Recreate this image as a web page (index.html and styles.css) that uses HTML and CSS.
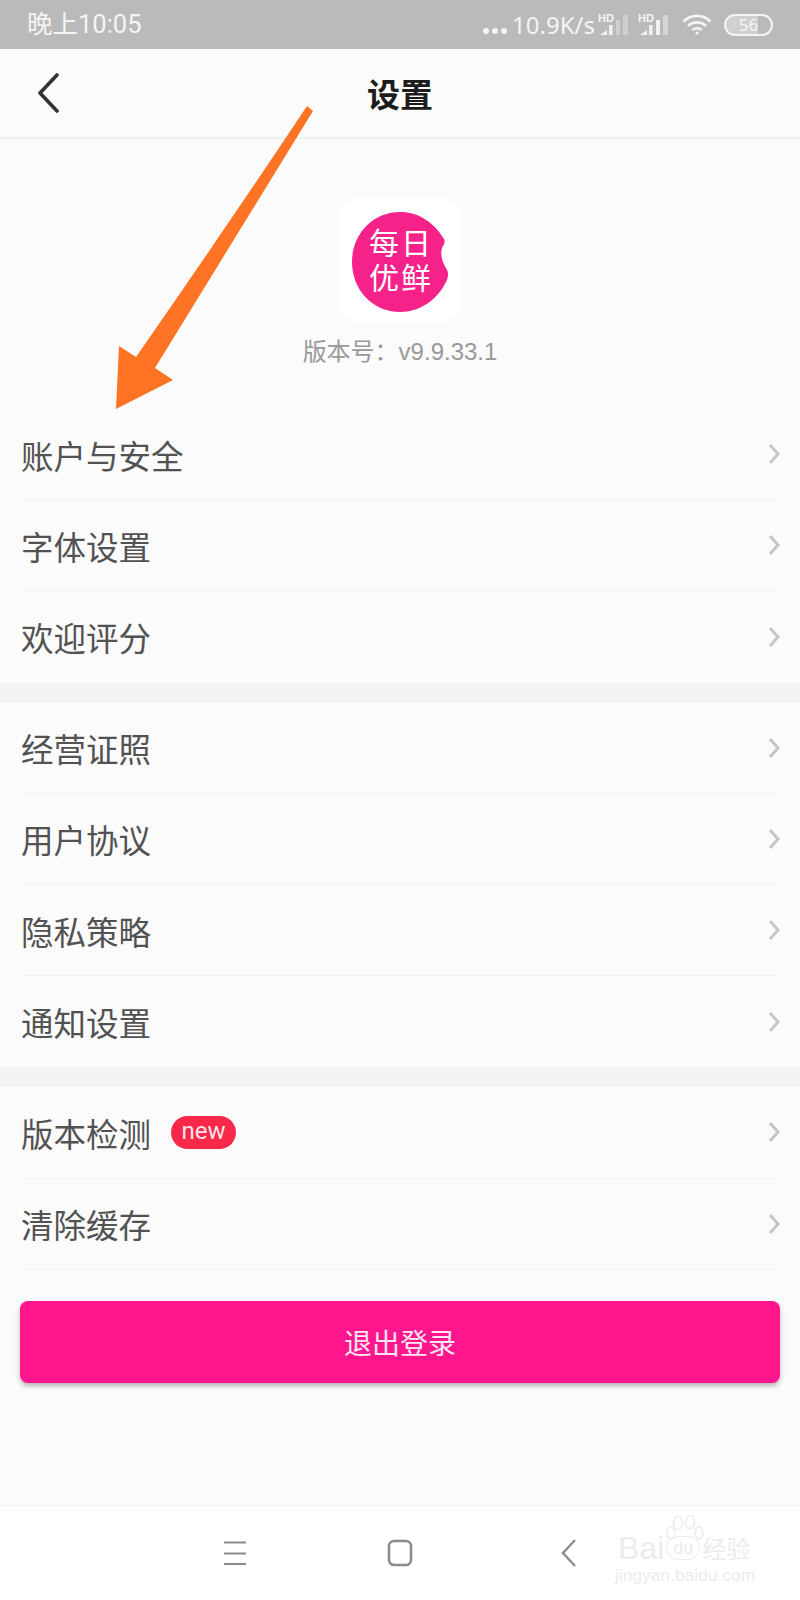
FILE: index.html
```html
<!DOCTYPE html>
<html lang="zh-CN">
<head>
<meta charset="UTF-8" />
<meta name="viewport" content="width=device-width, initial-scale=1.0" />
<title>设置</title>
<link rel="stylesheet" href="styles.css">
</head>
<body>
  <div class="status">
    <div class="status-time">晚上10:05</div>
    <div class="status-right">
      <span class="dots"><i></i><i></i><i></i></span>
      <span class="speed">10.9K/s</span>
      <span class="sim">
        <b>HD</b>
        <svg width="30" height="22" viewBox="0 0 30 22"><path d="M2 21l7-5v5z" fill="#f1f1f1"/><rect x="11" y="11" width="3.5" height="10" fill="#f1f1f1"/><rect x="18" y="6" width="4" height="15" fill="#cfcfcf"/><rect x="25" y="1" width="5" height="20" fill="#cfcfcf"/></svg>
      </span>
      <span class="sim">
        <b>HD</b>
        <svg width="30" height="22" viewBox="0 0 30 22"><path d="M2 21l7-5v5z" fill="#f1f1f1"/><rect x="11" y="11" width="3.5" height="10" fill="#f1f1f1"/><rect x="18" y="6" width="4" height="15" fill="#f1f1f1"/><rect x="25" y="1" width="5" height="20" fill="#d4d4d4"/></svg>
      </span>
      <svg class="wifi" width="30" height="21" viewBox="0 0 30 21" fill="none" stroke="#f4f4f4" stroke-width="2.6"><path d="M1.5 7.5a19 19 0 0 1 27 0"/><path d="M6 12a13 13 0 0 1 18 0"/><path d="M10.5 16a6.5 6.5 0 0 1 9 0"/><circle cx="15" cy="19" r="1.6" fill="#f4f4f4" stroke="none"/></svg>
      <span class="battery">56</span>
    </div>
  </div>

  <div class="header">
    <svg class="back" width="24" height="40" viewBox="0 0 24 40" fill="none" stroke="#333" stroke-width="3.6" stroke-linecap="round" stroke-linejoin="round"><path d="M20 2L3 20l17 18"/></svg>
    <h1>设置</h1>
  </div>

  <div class="main">
    <div class="about">
      <div class="app-icon">
        <div class="logo">
          <svg width="96" height="100" viewBox="0 0 96 100"><path d="M48 0C66 0 82 10 92 27 94 31 91 33 90 36 88 42 90 50 95 58 97 62 96 66 94 70 85 88 68 100 48 100 21 100 0 78 0 50S21 0 48 0z" fill="#f5228a"/></svg>
          <div class="logo-text">每日<br>优鲜</div>
        </div>
      </div>
      <div class="version">版本号：v9.9.33.1</div>
    </div>

    <div class="group">
      <div class="row"><span>账户与安全</span><svg class="chev" width="12" height="22" viewBox="0 0 12 22"><path d="M2 2l8 9-8 9"/></svg></div>
      <div class="row"><span>字体设置</span><svg class="chev" width="12" height="22" viewBox="0 0 12 22"><path d="M2 2l8 9-8 9"/></svg></div>
      <div class="row last"><span>欢迎评分</span><svg class="chev" width="12" height="22" viewBox="0 0 12 22"><path d="M2 2l8 9-8 9"/></svg></div>
    </div>
    <div class="group">
      <div class="row"><span>经营证照</span><svg class="chev" width="12" height="22" viewBox="0 0 12 22"><path d="M2 2l8 9-8 9"/></svg></div>
      <div class="row"><span>用户协议</span><svg class="chev" width="12" height="22" viewBox="0 0 12 22"><path d="M2 2l8 9-8 9"/></svg></div>
      <div class="row"><span>隐私策略</span><svg class="chev" width="12" height="22" viewBox="0 0 12 22"><path d="M2 2l8 9-8 9"/></svg></div>
      <div class="row last"><span>通知设置</span><svg class="chev" width="12" height="22" viewBox="0 0 12 22"><path d="M2 2l8 9-8 9"/></svg></div>
    </div>
    <div class="group plain">
      <div class="row"><span>版本检测</span><em class="badge">new</em><svg class="chev" width="12" height="22" viewBox="0 0 12 22"><path d="M2 2l8 9-8 9"/></svg></div>
      <div class="row"><span>清除缓存</span><svg class="chev" width="12" height="22" viewBox="0 0 12 22"><path d="M2 2l8 9-8 9"/></svg></div>
    </div>

    <button class="logout">退出登录</button>
  </div>

  <div class="nav">
    <svg class="nav-menu" width="24" height="24" viewBox="0 0 24 24" fill="none" stroke="#8c8c8c" stroke-width="2.2"><path d="M1 1.5h22M1 12.5h22M1 23h22"/></svg>
    <svg class="nav-home" width="26" height="30" viewBox="0 0 26 30" fill="none" stroke="#8c8c8c" stroke-width="2.6"><rect x="2" y="3" width="22" height="24" rx="5"/></svg>
    <svg class="nav-back" width="16" height="30" viewBox="0 0 16 30" fill="none" stroke="#8c8c8c" stroke-width="2.4"><path d="M14 2L2 15l12 13"/></svg>
  </div>

  <div class="watermark">
    <div class="wm-top">
      <span>Bai</span>
      <span class="wm-du">du</span>
      <span class="wm-cn">经验</span>
    </div>
    <svg class="wm-paw" width="40" height="28" viewBox="0 0 40 28" fill="none" stroke="#ececec" stroke-width="1.5"><ellipse cx="6" cy="18" rx="4" ry="6"/><ellipse cx="13" cy="8" rx="4.5" ry="7"/><ellipse cx="25" cy="7" rx="4.5" ry="6.5"/><ellipse cx="34" cy="18" rx="4" ry="6"/></svg>
    <div class="wm-url">jingyan.baidu.com</div>
  </div>

  <svg class="arrow" width="200" height="304" viewBox="0 0 200 304"><path d="M191 0l6 5L39 262l18 12-57 29 3-63 17 11Q118 110 191 0z" fill="#ff7424"/></svg>
</body>
</html>
```

FILE: styles.css
```css
* {
  box-sizing: border-box;
}
html, body {
  margin: 0;
  padding: 0;
}
body {
  position: relative;
  width: 800px;
  height: 1600px;
  display: flex;
  flex-direction: column;
  overflow: hidden;
  background: #fbfbfb;
  font-family: "Noto Sans CJK SC", "Noto Sans", sans-serif;
  color: #4a4a4a;
}

/* status bar */
.status {
  height: 49px;
  flex: none;
  display: flex;
  align-items: center;
  justify-content: space-between;
  padding: 0 27px;
  background: #bababa;
  color: #f4f4f4;
}
.status-time {
  font-size: 25.5px;
  line-height: 49px;
  font-family: Roboto, "Noto Sans CJK SC", sans-serif;
}
.status-right {
  display: flex;
  align-items: center;
}
.dots {
  display: flex;
  gap: 3px;
  margin-top: 12px;
  margin-right: 5px;
}
.dots i {
  width: 6px;
  height: 6px;
  border-radius: 50%;
  background: #f4f4f4;
}
.speed {
  font-family: "Noto Sans", sans-serif;
  font-size: 24px;
  line-height: 30px;
  margin-right: 3px;
}
.sim {
  position: relative;
  width: 30px;
  height: 22px;
  margin-right: 10px;
}
.sim svg {
  display: block;
}
.sim b {
  position: absolute;
  left: 0;
  top: 0;
  font: bold 11px/9px "Liberation Sans", sans-serif;
}
.wifi {
  margin-left: 4px;
  margin-right: 12px;
}
.battery {
  width: 49px;
  height: 22px;
  border: 2px solid #f4f4f4;
  border-radius: 11px;
  font-family: "Noto Sans", sans-serif;
  font-size: 17px;
  line-height: 18px;
  text-align: center;
  background: linear-gradient(90deg, #d0d0d0 70%, transparent 70%);
}

/* title bar */
.header {
  position: relative;
  height: 90px;
  flex: none;
  display: flex;
  align-items: center;
  justify-content: center;
  border-bottom: 2px solid #f0f0f0;
}
.header h1 {
  margin: 0;
  font-size: 33px;
  font-weight: 700;
  color: #1c1c1c;
}
.back {
  position: absolute;
  left: 37px;
  top: 24px;
}

.main {
  flex: 1;
  display: flex;
  flex-direction: column;
}
.about {
  height: 270px;
  flex: none;
  padding-top: 60px;
  display: flex;
  flex-direction: column;
  align-items: center;
}
.app-icon {
  width: 122px;
  height: 122px;
  padding-top: 3px;
  display: flex;
  align-items: center;
  justify-content: center;
  border-radius: 20px;
  background: #fff;
}
.logo {
  position: relative;
  width: 96px;
  height: 100px;
}
.logo svg {
  display: block;
}
.logo-text {
  position: absolute;
  left: 17px;
  top: 14px;
  width: 66px;
  color: #fff;
  font-family: "Liberation Sans", "Noto Sans CJK SC", sans-serif;
  font-size: 30px;
  line-height: 35px;
  letter-spacing: 2px;
  white-space: nowrap;
}
.version {
  margin-top: 10px;
  font-family: "Liberation Sans", "Noto Sans CJK SC", sans-serif;
  font-size: 24px;
  line-height: 42px;
  color: #999;
}

/* setting rows */
.group {
  flex: none;
  border-bottom: 20px solid #f3f3f3;
}
.group.plain {
  border-bottom: none;
}
.row {
  height: 91.2px;
  margin: 0 20px;
  padding-left: 1px;
  display: flex;
  align-items: center;
  border-bottom: 1px solid #f2f2f2;
  font-size: 32.5px;
  color: #525252;
}
.row.last {
  border-bottom: none;
}
.chev {
  margin-left: auto;
  fill: none;
  stroke: #c6c6c6;
  stroke-width: 3;
}
.badge {
  margin-left: 20px;
  width: 65px;
  height: 33px;
  border-radius: 17px;
  background: #f8284a;
  color: #fde4e8;
  font-family: Roboto, sans-serif;
  font-style: normal;
  font-size: 24px;
  line-height: 30px;
  text-align: center;
}
.logout {
  margin: 31px 20px 0;
  height: 82px;
  flex: none;
  border: none;
  border-radius: 8px;
  background: #ff168c;
  box-shadow: 0 3px 5px rgba(0, 0, 0, 0.28);
  color: #fde4f1;
  font-family: "Noto Sans CJK SC", sans-serif;
  font-size: 28px;
}

/* bottom nav */
.nav {
  height: 95px;
  flex: none;
  display: flex;
  align-items: center;
  background: #fff;
  border-top: 1px solid #f2f2f2;
}
.nav-menu {
  margin-left: 223px;
}
.nav-home {
  margin-left: 140px;
}
.nav-back {
  margin-left: 148px;
}

/* overlays: watermark and annotation arrow */
.watermark {
  position: absolute;
  left: 615px;
  top: 1515px;
  width: 146px;
  height: 78px;
  color: #ececec;
  font-family: "Liberation Sans", sans-serif;
}
.wm-top {
  position: absolute;
  left: 3px;
  top: 16px;
  display: flex;
  align-items: center;
  font-size: 32px;
  line-height: 34px;
  white-space: nowrap;
}
.wm-du {
  width: 34px;
  height: 24px;
  margin: 0 2px;
  border: 1px solid #ececec;
  border-radius: 12px;
  font-size: 18px;
  line-height: 22px;
  text-align: center;
}
.wm-cn {
  font-family: "Noto Sans CJK SC", sans-serif;
  font-size: 24px;
}
.wm-paw {
  position: absolute;
  left: 50px;
  top: 0;
}
.wm-url {
  position: absolute;
  left: 0;
  top: 49px;
  font-size: 17.4px;
  line-height: 22px;
  white-space: nowrap;
}
.arrow {
  position: absolute;
  left: 116px;
  top: 106px;
}
```
